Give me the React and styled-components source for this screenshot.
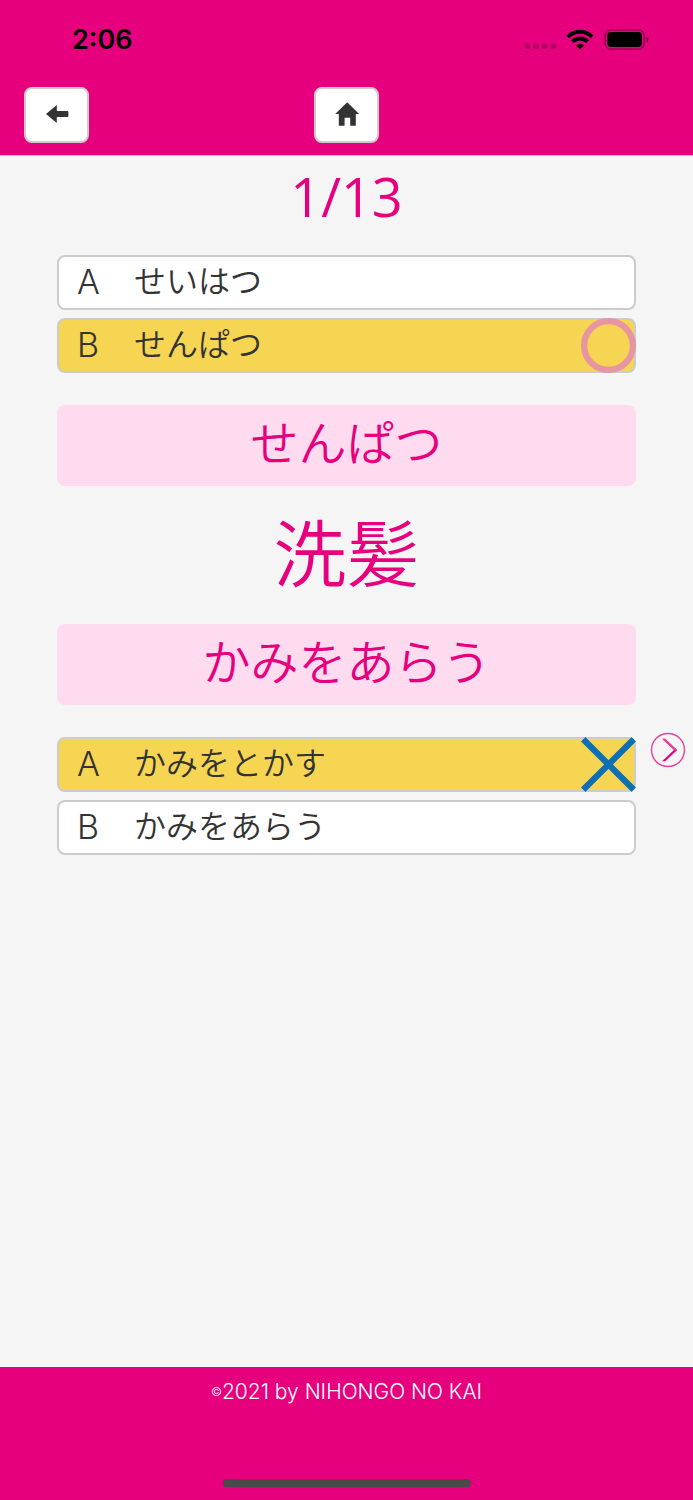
import React from 'react';
import styled, { createGlobalStyle } from 'styled-components';

const pink = '#e6007e';

const GlobalStyle = createGlobalStyle`
  *, *::before, *::after { box-sizing: border-box; }
  body {
    margin: 0;
    background: #f5f5f5;
    color: #333;
    font-family: Inter, "Noto Sans CJK JP", sans-serif;
    font-weight: 350;
  }
  svg { display: block; }
`;

const Page = styled.div`
  min-height: 100vh;
  display: flex;
  flex-direction: column;
`;

const Header = styled.header`
  background: ${pink};
  border-bottom: 1px solid #e7b5d0;
`;

const StatusBar = styled.div`
  display: flex;
  align-items: center;
  justify-content: space-between;
  height: 80px;
  padding: 0 44px 0 72px;
  color: #000;
`;

const Clock = styled.time`
  font-size: 27px;
  font-weight: 600;
  line-height: 32px;
`;

const StatusIcons = styled.div`
  display: flex;
  align-items: center;
  gap: 10px;
`;

const NavBar = styled.nav`
  display: grid;
  grid-template-columns: 1fr auto 1fr;
  padding: 7px 24px 12px;
`;

const NavButton = styled.button`
  display: flex;
  align-items: center;
  justify-content: center;
  justify-self: start;
  width: 65px;
  height: 56px;
  padding: 0 0 2px;
  border: 2px solid #ccc;
  border-radius: 8px;
  background: #fff;
  color: #333;
`;

const Main = styled.main`
  flex: 1;
  display: flex;
  flex-direction: column;
`;

const Progress = styled.p`
  margin: 0;
  padding: 8px 0 27px;
  color: ${pink};
  font-family: "Open Sans", sans-serif;
  font-size: 54px;
  font-weight: 400;
  line-height: 64px;
  text-align: center;
`;

const Section = styled.section`
  display: grid;
  grid-template-columns: 57px minmax(0, 1fr) 57px;
  align-items: start;
`;

const Options = styled.div`
  grid-column: 2;
  display: grid;
  gap: 8px;
`;

const Option = styled.button`
  position: relative;
  display: flex;
  align-items: center;
  height: 55px;
  padding: 0 18px 2px;
  border: 2px solid #ccc;
  border-radius: 8px;
  background: ${(p) => (p.$selected ? '#f6d553' : '#fff')};
  color: #333;
  font-family: inherit;
  font-weight: 350;
  font-size: 32px;
  line-height: 48px;
  text-align: left;
`;

const Letter = styled.span`
  width: 57px;
  font-size: 34px;
  font-weight: 300;
`;

const Mark = styled.svg`
  position: absolute;
  top: -2px;
  right: -2px;
  width: 55px;
  height: 55px;
`;

const Reading = styled.p`
  margin: 32px 57px;
  padding: 6px 8px 10px;
  border-radius: 8px;
  background: #ffdbef;
  color: ${pink};
  font-size: 48px;
  line-height: 65px;
  text-align: center;
`;

const Kanji = styled.h1`
  margin: 0;
  color: ${pink};
  font-size: 73px;
  font-weight: 350;
  line-height: 74px;
  text-align: center;
`;

const NextButton = styled.button`
  grid-column: 3;
  justify-self: center;
  width: 36px;
  height: 36px;
  margin: -5px 0 0 6px;
  padding: 0;
  border: 0;
  background: none;
`;

const Footer = styled.footer`
  display: flex;
  flex-direction: column;
  align-items: center;
  justify-content: space-between;
  height: 133px;
  padding: 10px 0 13px;
  background: ${pink};
  color: #fff;
`;

const Copyright = styled.small`
  display: flex;
  align-items: center;
  font-size: 21px;
  font-weight: 300;
  line-height: 30px;
`;

const CopySign = styled.span`
  font-size: 12px;
`;

const HomeIndicator = styled.div`
  width: 248px;
  height: 8px;
  border-radius: 4px;
  background: #4a4a4a;
`;

function SignalIcon() {
  return (
    <svg width="33" height="26" viewBox="0 0 33 26" fill="#b30062" aria-hidden="true">
      <rect x="1.7" y="16.5" width="5.6" height="5.6" rx="1.8" />
      <rect x="10.3" y="16.5" width="5.6" height="5.6" rx="1.8" />
      <rect x="18.9" y="16.5" width="5.6" height="5.6" rx="1.8" />
      <rect x="27.4" y="16.5" width="5.6" height="5.6" rx="1.8" />
    </svg>
  );
}

function WifiIcon() {
  return (
    <svg width="28" height="22" viewBox="0 0 28 22" aria-hidden="true">
      <g fill="none" stroke="#000" strokeWidth="4">
        <path d="M1.8 7.8C8.6 0.9 19.4 0.9 26.2 7.8" />
        <path d="M6.4 12.6C10.7 8.5 17.3 8.5 21.6 12.6" />
      </g>
      <path d="M14 20.5L9.9 16.5Q14 13 18.1 16.5Z" />
    </svg>
  );
}

function BatteryIcon() {
  return (
    <svg width="45" height="22" viewBox="0 0 45 22" aria-hidden="true">
      <rect x="1" y="0.8" width="39.2" height="19.4" rx="6" fill="none" stroke="#8f004e" strokeWidth="1.6" />
      <rect x="3.2" y="3.1" width="34.8" height="14.8" rx="4" />
      <path d="M42.2 7.4Q44.6 8.4 44.6 10.6T42.2 13.8Z" fill="#8f004e" />
    </svg>
  );
}

function ArrowLeftIcon() {
  return (
    <svg width="24" height="18" viewBox="0 0 24 18" fill="currentColor" aria-hidden="true">
      <path d="M1 9L11.8 0V6H22.4Q23.4 6 23.4 7V11Q23.4 12 22.4 12H11.8V18Z" />
    </svg>
  );
}

function HomeIcon() {
  return (
    <svg width="26" height="24" viewBox="0 0 26 24" fill="currentColor" aria-hidden="true">
      <path d="M13.2 .2L25.2 12H21.8V23.7H16.2V15.8H10.6V23.7H4.8V12H1.2Z" />
    </svg>
  );
}

function ChevronIcon() {
  return (
    <svg width="36" height="36" viewBox="0 0 36 36" aria-hidden="true">
      <circle cx="18" cy="18" r="16.5" fill="none" stroke="#eb3d9e" strokeWidth="1.4" />
      <path d="M12 6.8H15.2L27.2 18L15.2 29.3H12L24 18Z" fill={pink} />
      <path d="M12 6.8L24.6 18.3L27.2 18L15.2 6.8Z" fill="#f48bc4" opacity=".4" />
    </svg>
  );
}

function CorrectMark() {
  return (
    <Mark viewBox="0 0 55 55" role="img" aria-label="正解">
      <circle cx="27.5" cy="27.5" r="24.4" fill="none" stroke="#e895a2" strokeWidth="6.2" />
    </Mark>
  );
}

function WrongMark() {
  return (
    <Mark viewBox="0 0 55 55" role="img" aria-label="不正解">
      <path d="M2.2 2.2L52.8 52.8M52.8 2.2L2.2 52.8" fill="none" stroke="#0d70b7" strokeWidth="6.2" />
    </Mark>
  );
}

function Answer({ letter, text, selected, children }) {
  return (
    <Option type="button" $selected={selected} aria-pressed={Boolean(selected)}>
      <Letter>{letter}</Letter>
      {text}
      {children}
    </Option>
  );
}

export default function App() {
  return (
    <Page>
      <GlobalStyle />
      <Header>
        <StatusBar>
          <Clock>2:06</Clock>
          <StatusIcons>
            <SignalIcon />
            <WifiIcon />
            <BatteryIcon />
          </StatusIcons>
        </StatusBar>
        <NavBar>
          <NavButton type="button" aria-label="戻る"><ArrowLeftIcon /></NavButton>
          <NavButton type="button" aria-label="ホーム"><HomeIcon /></NavButton>
        </NavBar>
      </Header>
      <Main>
        <Progress>1/13</Progress>
        <Section>
          <Options>
            <Answer letter="A" text="せいはつ" />
            <Answer letter="B" text="せんぱつ" selected><CorrectMark /></Answer>
          </Options>
        </Section>
        <Reading>せんぱつ</Reading>
        <Kanji>洗髪</Kanji>
        <Reading>かみをあらう</Reading>
        <Section>
          <Options>
            <Answer letter="A" text="かみをとかす" selected><WrongMark /></Answer>
            <Answer letter="B" text="かみをあらう" />
          </Options>
          <NextButton type="button" aria-label="次へ"><ChevronIcon /></NextButton>
        </Section>
      </Main>
      <Footer>
        <Copyright><CopySign>©</CopySign>2021 by NIHONGO NO KAI</Copyright>
        <HomeIndicator />
      </Footer>
    </Page>
  );
}
